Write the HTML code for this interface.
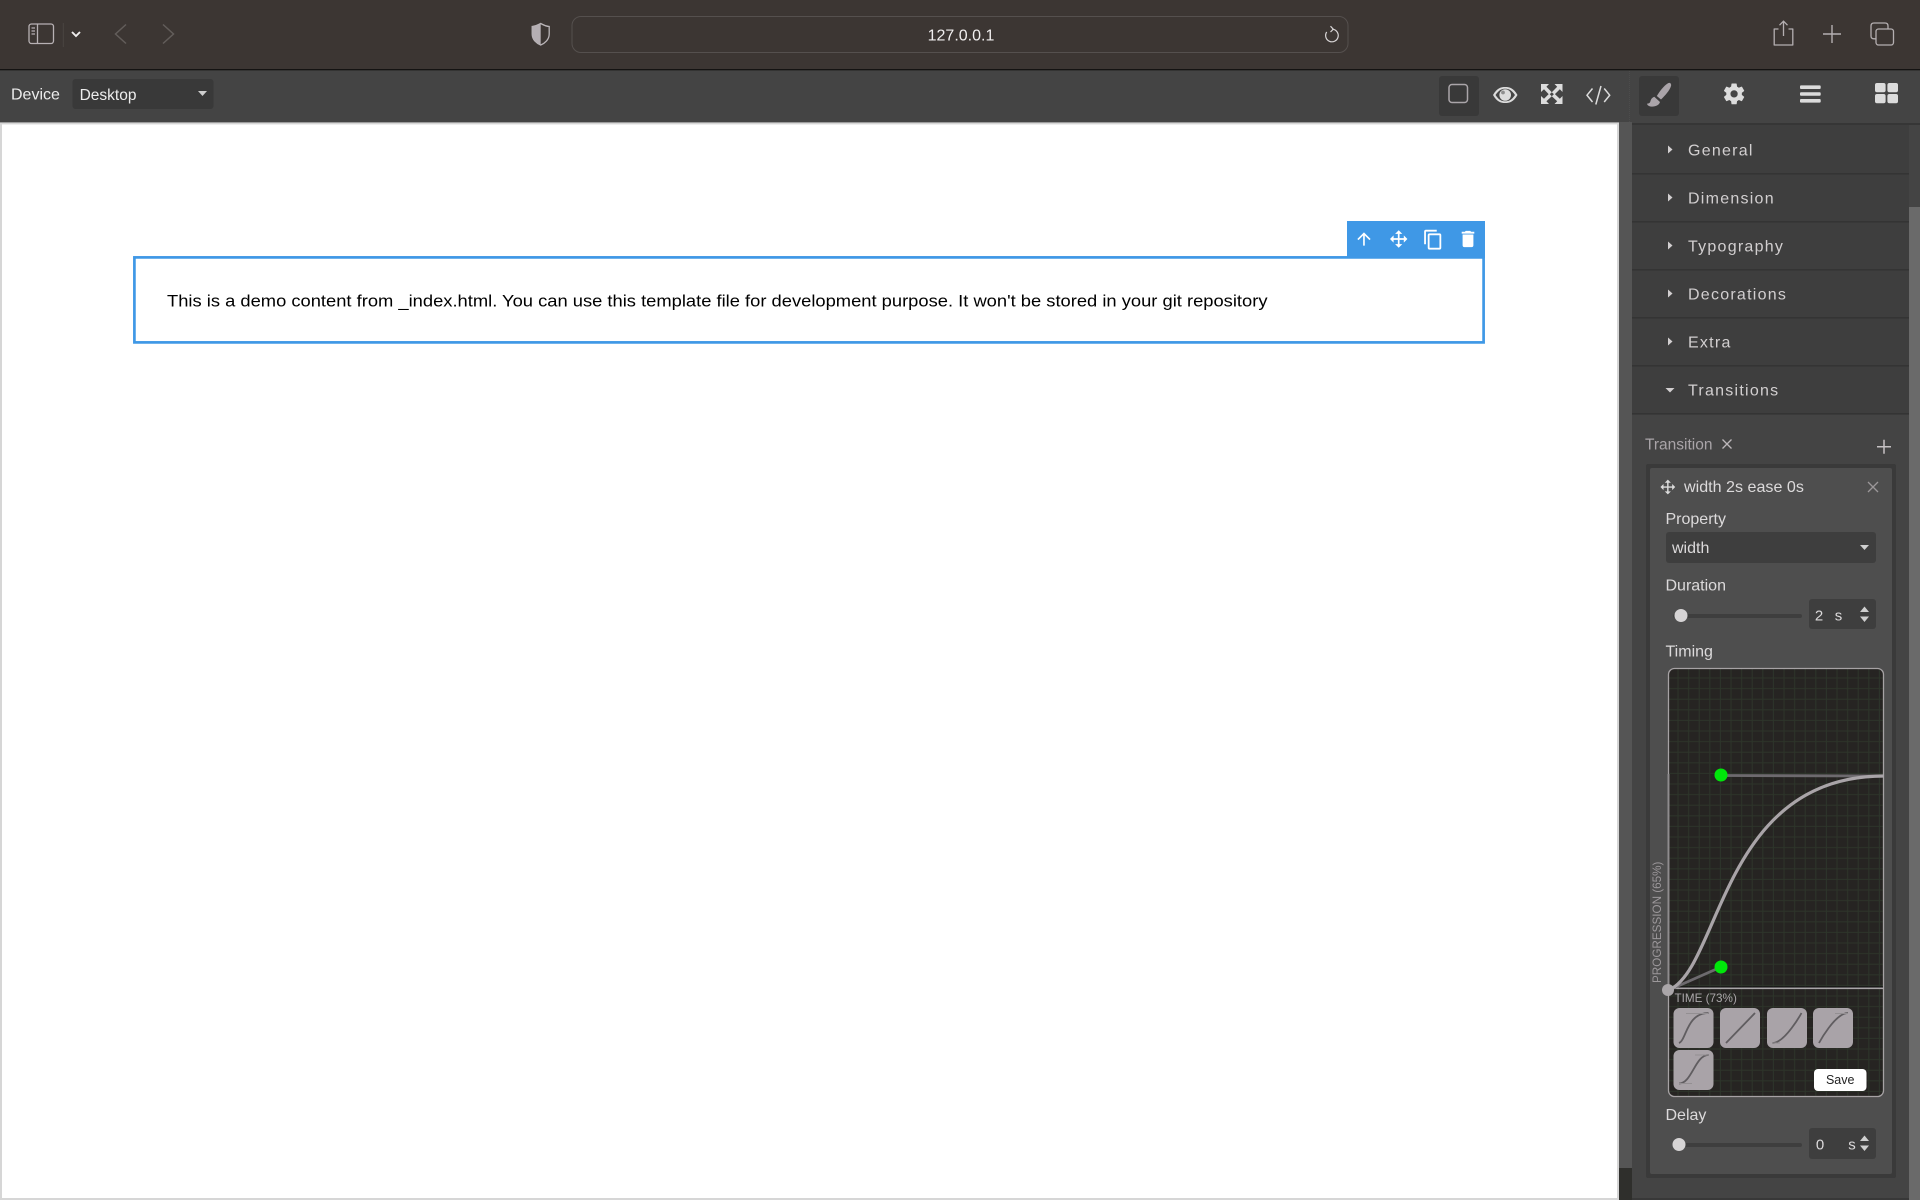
<!DOCTYPE html>
<html lang="en">
<head>
<meta charset="utf-8">
<title>127.0.0.1</title>
<style>
html,body{margin:0;padding:0;width:1920px;height:1200px;overflow:hidden;background:#444}
svg{position:absolute;left:0;top:0;display:block}
text{font-family:"Liberation Sans",Arial,sans-serif}
</style>
</head>
<body>
<svg width="1920" height="1200" viewBox="0 0 1920 1200" xmlns="http://www.w3.org/2000/svg">
<defs>
<pattern id="grid" width="10.6" height="10.6" patternUnits="userSpaceOnUse" x="1668" y="668">
<rect width="10.6" height="10.6" fill="#262422"/>
<path d="M10 0V10.6M0 10H10.6" stroke="#2d352a" stroke-width="1" fill="none"/>
</pattern>
</defs>

<!-- browser chrome -->
<rect x="0" y="0" width="1920" height="69" fill="#3c3633"/>
<rect x="0" y="69" width="1920" height="1.4" fill="#141312"/>
<rect x="0" y="70.4" width="1920" height="1130" fill="#444444"/>

<!-- sidebar icon -->
<rect x="29" y="24" width="24.5" height="19.5" rx="2.5" fill="none" stroke="#b7b1b4" stroke-width="1.3"/>
<path d="M37.5 24V43.5" stroke="#b7b1b4" stroke-width="1.3"/>
<path d="M31.5 28H35M31.5 31H35M31.5 34H35" stroke="#b7b1b4" stroke-width="1.2"/>
<path d="M63.3 23V47" stroke="#4a4542" stroke-width="1"/>
<path d="M72 32L76 36L80 32" fill="none" stroke="#f0eeee" stroke-width="1.9"/>
<path d="M126 24.5L115.5 34L126 43.5" fill="none" stroke="#625d5a" stroke-width="1.5"/>
<path d="M163 24.5L173.5 34L163 43.5" fill="none" stroke="#625d5a" stroke-width="1.5"/>

<!-- shield -->
<path d="M540.7 23.5C536.5 25.8 534 26.4 532.2 26.5V34C532.2 39.8 536.8 43.4 540.7 45C544.6 43.4 549.2 39.8 549.2 34V26.5C547.4 26.4 544.9 25.8 540.7 23.5Z" fill="none" stroke="#bab5b8" stroke-width="1.3"/>
<path d="M540.7 23.5C536.5 25.8 534 26.4 532.2 26.5V34C532.2 39.8 536.8 43.4 540.7 45Z" fill="#b5afb3"/>

<!-- url bar -->
<rect x="572" y="16.5" width="776" height="36" rx="9" fill="#3c3633" stroke="#55504e" stroke-width="1"/>
<text x="961" y="40.7" font-size="16" text-anchor="middle" fill="#f1efef">127.0.0.1</text>
<path d="M1332.3 29.2A6.3 6.3 0 1 1 1326.7 32" fill="none" stroke="#d8d5d6" stroke-width="1.2"/>
<path d="M1330.5 26.2L1333.3 29.2L1330.5 32" fill="none" stroke="#d8d5d6" stroke-width="1.2"/>

<!-- share / plus / tabs -->
<path d="M1778.5 29H1774.2V45H1792.8V29H1788.5" fill="none" stroke="#b4afb1" stroke-width="1.3" stroke-linejoin="round"/>
<path d="M1783.5 36V21.5M1779.5 25.2L1783.5 21.2L1787.5 25.2" fill="none" stroke="#b4afb1" stroke-width="1.3"/>
<path d="M1823 34H1841M1832 25V43" stroke="#b4afb1" stroke-width="1.4"/>
<rect x="1876" y="29" width="17.5" height="16" rx="2.5" fill="none" stroke="#b4afb1" stroke-width="1.3"/>
<path d="M1876 38.8H1874C1872 38.8 1871 37.8 1871 36V26C1871 24 1872 23 1874 23H1885C1887 23 1888 24 1888 26V29" fill="none" stroke="#b4afb1" stroke-width="1.3"/>

<!-- device bar -->
<text x="11" y="99.5" font-size="16" fill="#ececec">Device</text>
<rect x="72.5" y="79" width="141" height="30" rx="3" fill="#393939"/>
<text x="79.6" y="100" font-size="15.5" fill="#ececec">Desktop</text>
<path d="M198 91H207L202.5 96Z" fill="#cfcfcf"/>

<!-- toolbar buttons -->
<rect x="1439" y="76" width="40" height="40" rx="3" fill="#393939"/>
<rect x="1449" y="84.5" width="18.5" height="18" rx="3" fill="none" stroke="#aaa5a9" stroke-width="1.5"/>
<path d="M1493 95C1497 88 1501 87 1505.2 87C1509.5 87 1513.5 88 1517.5 95C1513.5 102 1509.5 103 1505.2 103C1501 103 1497 102 1493 95Z" fill="#dcdcdc"/>
<path d="M1495.5 95C1499 89.7 1502 88.7 1505.2 88.7C1508.5 88.7 1511.5 89.7 1515 95C1511.5 100.3 1508.5 101.3 1505.2 101.3C1502 101.3 1499 100.3 1495.5 95Z" fill="#444"/>
<circle cx="1505.2" cy="95" r="5.8" fill="#dcdcdc"/>
<circle cx="1503" cy="92.5" r="1.9" fill="#8f8f8f"/>
<path d="M1541 84H1549L1546.4 86.8L1551.8 92.2L1549.2 94.8L1544 89.2L1541 92ZM1562.5 84V92L1559.8 89.2L1554.4 94.6L1551.8 92.2L1557.2 86.8L1554.5 84ZM1541 104V96L1544 98.8L1549.2 93.6L1551.8 96.2L1546.4 101.2L1549 104ZM1562.5 104H1554.5L1557.2 101.2L1551.8 96.2L1554.4 93.6L1559.8 98.8L1562.5 96Z" fill="#dcdcdc"/>
<path d="M1592.5 88.5L1587 95.2L1592.5 102M1604.2 88.5L1609.7 95.2L1604.2 102M1601 86L1595.8 104.5" fill="none" stroke="#dcdcdc" stroke-width="1.5"/>
<path d="M1629.5 71V122" stroke="#4c4c4c" stroke-width="1" stroke-dasharray="1 1"/>

<!-- tab icons -->
<rect x="1639" y="76" width="40" height="40" rx="3" fill="#393939"/>
<path d="M1668 83.2C1670 82.2 1671.6 83.6 1671 86C1669.6 90.5 1665.5 95 1661 99.5L1656.8 96C1659.5 91.5 1663.5 86 1668 83.2Z" fill="#aaa4a9"/>
<path d="M1654.3 96.8L1660 102C1659.2 105 1656 106.6 1652 106.6C1649.3 106.6 1647.2 105.3 1647 103.6C1649 103.6 1650 103 1650.5 101C1651 99 1652.5 97.4 1654.3 96.8Z" fill="#aaa4a9"/>
<g transform="translate(1721.6,81.4) scale(1.04)" fill="#dcdcdc"><path d="M12,15.5A3.5,3.5 0 0,1 8.5,12A3.5,3.5 0 0,1 12,8.5A3.5,3.5 0 0,1 15.5,12A3.5,3.5 0 0,1 12,15.5M19.43,12.97C19.47,12.65 19.5,12.33 19.5,12C19.5,11.67 19.47,11.34 19.43,11L21.54,9.37C21.73,9.22 21.78,8.95 21.66,8.73L19.66,5.27C19.54,5.05 19.27,4.96 19.05,5.05L16.56,6.05C16.04,5.66 15.5,5.32 14.87,5.07L14.5,2.42C14.46,2.18 14.25,2 14,2H10C9.75,2 9.54,2.18 9.5,2.42L9.13,5.07C8.5,5.32 7.96,5.66 7.44,6.05L4.95,5.05C4.73,4.96 4.46,5.05 4.34,5.27L2.34,8.73C2.21,8.95 2.27,9.22 2.46,9.37L4.57,11C4.53,11.34 4.5,11.67 4.5,12C4.5,12.33 4.53,12.65 4.57,12.97L2.46,14.63C2.27,14.78 2.21,15.05 2.34,15.27L4.34,18.73C4.46,18.95 4.73,19.03 4.95,18.95L7.44,17.94C7.96,18.34 8.5,18.68 9.13,18.93L9.5,21.58C9.54,21.82 9.75,22 10,22H14C14.25,22 14.46,21.82 14.5,21.58L14.87,18.93C15.5,18.67 16.04,18.34 16.56,17.94L19.05,18.95C19.27,19.03 19.54,18.95 19.66,18.73L21.66,15.27C21.78,15.05 21.73,14.78 21.54,14.63L19.43,12.97Z"/></g>
<rect x="1800" y="85.4" width="20.7" height="3.6" rx="1" fill="#dcdcdc"/>
<rect x="1800" y="92.2" width="20.7" height="3.6" rx="1" fill="#dcdcdc"/>
<rect x="1800" y="99" width="20.7" height="3.6" rx="1" fill="#dcdcdc"/>
<rect x="1875" y="83" width="10.6" height="9.2" rx="2" fill="#dcdcdc"/>
<rect x="1887.4" y="83" width="10.6" height="9.2" rx="2" fill="#dcdcdc"/>
<rect x="1875" y="94" width="10.6" height="9.2" rx="2" fill="#dcdcdc"/>
<rect x="1887.4" y="94" width="10.6" height="9.2" rx="2" fill="#dcdcdc"/>

<!-- canvas -->
<rect x="1619" y="122" width="13" height="1078" fill="#555555"/>
<rect x="1619" y="1168" width="13" height="32" fill="#2f2f2c"/>
<rect x="0" y="122.4" width="1619" height="1077.6" fill="#d6d6d6"/>
<rect x="2" y="124.4" width="1615" height="1073.6" fill="#ffffff"/>

<!-- selected block -->
<rect x="134.4" y="257.4" width="1349.2" height="85" fill="#fff" stroke="#3f98e6" stroke-width="2.7"/>
<rect x="1347" y="221" width="138" height="37" fill="#3f98e6"/>
<text x="167" y="306.7" font-size="17" fill="#000" textLength="1100.5" lengthAdjust="spacingAndGlyphs">This is a demo content from _index.html. You can use this template file for development purpose. It won't be stored in your git repository</text>
<g fill="#ffffff">
<g transform="translate(1354,229) scale(.83)"><path d="M4 12l1.41 1.41L11 7.83V20h2V7.83l5.58 5.59L20 12l-8-8-8 8z"/></g>
<g transform="translate(1388.5,228.8) scale(.85)"><path d="M13,6V11H18V7.75L22.25,12L18,16.25V13H13V18H16.25L12,22.25L7.75,18H11V13H6V16.25L1.75,12L6,7.75V11H11V6H7.75L12,1.75L16.25,6H13Z"/></g>
<g transform="translate(1422.35,228.9) scale(.9)"><path d="M19,21H8V7H19M19,5H8A2,2 0 0,0 6,7V21A2,2 0 0,0 8,23H19A2,2 0 0,0 21,21V7A2,2 0 0,0 19,5M16,1H4A2,2 0 0,0 2,3V17H4V3H16V1Z"/></g>
<g transform="translate(1457.2,228.2) scale(.9)"><path d="M19,4H15.5L14.5,3H9.5L8.5,4H5V6H19M6,19A2,2 0 0,0 8,21H16A2,2 0 0,0 18,19V7H6V19Z"/></g>
</g>

<!-- panel -->
<rect x="1632" y="123" width="288" height="2" fill="#363636"/>
<rect x="1632" y="125" width="277" height="289" fill="#3e3e3e"/>
<rect x="1909" y="207" width="11" height="993" fill="#6a6a6a"/>
<g fill="#343434">
<rect x="1632" y="173" width="277" height="1.6"/>
<rect x="1632" y="221" width="277" height="1.6"/>
<rect x="1632" y="269" width="277" height="1.6"/>
<rect x="1632" y="317" width="277" height="1.6"/>
<rect x="1632" y="365" width="277" height="1.6"/>
<rect x="1632" y="413" width="277" height="1.6"/>
</g>
<g font-size="16" letter-spacing="1.25" fill="#d2cfd0">
<text x="1688" y="155.5">General</text>
<text x="1688" y="203.5">Dimension</text>
<text x="1688" y="251.5">Typography</text>
<text x="1688" y="299.5">Decorations</text>
<text x="1688" y="347.5">Extra</text>
<text x="1688" y="395.5">Transitions</text>
</g>
<g fill="#d2cfd0">
<path d="M1668 145.5L1672.5 149.5L1668 153.5Z"/>
<path d="M1668 193.5L1672.5 197.5L1668 201.5Z"/>
<path d="M1668 241.5L1672.5 245.5L1668 249.5Z"/>
<path d="M1668 289.5L1672.5 293.5L1668 297.5Z"/>
<path d="M1668 337.5L1672.5 341.5L1668 345.5Z"/>
<path d="M1665.5 388L1674.5 388L1670 392.5Z"/>
</g>

<!-- transition header -->
<text x="1645" y="449.3" font-size="15.5" fill="#a9a4a8">Transition</text>
<path d="M1722.5 439.5L1731.5 448.5M1731.5 439.5L1722.5 448.5" stroke="#bdb8bb" stroke-width="1.3"/>
<path d="M1877 446.7H1891M1884 439.7V453.7" stroke="#c6c2c4" stroke-width="1.5"/>

<!-- card -->
<rect x="1646" y="464" width="250" height="714" rx="2" fill="#3a3a3a"/>
<rect x="1650" y="468" width="242" height="706" rx="2" fill="#4e4e4e"/>
<g transform="translate(1659.2,478.4) scale(.72)" fill="#dcdcdc"><path d="M13,6V11H18V7.75L22.25,12L18,16.25V13H13V18H16.25L12,22.25L7.75,18H11V13H6V16.25L1.75,12L6,7.75V11H11V6H7.75L12,1.75L16.25,6H13Z"/></g>
<text x="1684" y="492" font-size="16.1" fill="#dcdadb">width 2s ease 0s</text>
<path d="M1868 482L1878 492M1878 482L1868 492" stroke="#9b9799" stroke-width="1.3"/>

<text x="1665.5" y="524" font-size="16" fill="#dcdadb">Property</text>
<rect x="1666" y="532" width="210" height="31" rx="3" fill="#3e3e3e"/>
<text x="1672" y="553" font-size="16" fill="#dcdadb">width</text>
<path d="M1860 545H1869L1864.5 550Z" fill="#cfcfcf"/>

<text x="1665.5" y="590.7" font-size="16" fill="#dcdadb">Duration</text>
<rect x="1673" y="614" width="129" height="4" rx="2" fill="#3e3e3e"/>
<circle cx="1681" cy="615.5" r="6.5" fill="#d6d4d5"/>
<rect x="1809" y="599" width="67" height="30" rx="3" fill="#3e3e3e"/>
<text x="1819" y="620.5" font-size="15" text-anchor="middle" fill="#dcdadb">2</text>
<text x="1838.5" y="620.5" font-size="15" text-anchor="middle" fill="#dcdadb">s</text>
<path d="M1864.5 606.5L1869 612H1860Z" fill="#cfcfcf"/>
<path d="M1864.5 622L1869 616.5H1860Z" fill="#cfcfcf"/>

<text x="1665.5" y="656.7" font-size="16" fill="#dcdadb">Timing</text>

<!-- bezier editor -->
<rect x="1668.5" y="668.5" width="215" height="428" rx="6" fill="url(#grid)" stroke="#a6a2a4" stroke-width="1.3"/>
<path d="M1668.5 774V990" stroke="#8f8c8e" stroke-width="2"/>
<rect x="1669" y="986.5" width="214" height="1" fill="#0f0f0f"/>
<rect x="1669" y="987.5" width="214.5" height="1.6" fill="#aaa6a8"/>
<path d="M1669 990L1721 967" stroke="#6d6a6e" stroke-width="2.8" fill="none"/>
<path d="M1721 775.5L1884 776" stroke="#6d6a6e" stroke-width="2.8" fill="none"/>
<path d="M1669 990C1721 967 1721 776 1884 776" fill="none" stroke="#a9a4a8" stroke-width="3.2"/>
<circle cx="1668" cy="990" r="6" fill="#aaa6a9"/>
<circle cx="1721" cy="775" r="6.5" fill="#00e60a"/>
<circle cx="1721" cy="967" r="6.5" fill="#00e60a"/>
<text transform="translate(1661,983) rotate(-90)" font-size="11.7" fill="#9c989b">PROGRESSION (65%)</text>
<text x="1674.5" y="1002" font-size="11.7" fill="#aaa6a9">TIME (73%)</text>

<!-- presets -->
<g fill="#a9a3a8">
<rect x="1673.5" y="1008" width="40" height="40" rx="6"/>
<rect x="1720" y="1008" width="40" height="40" rx="6"/>
<rect x="1767" y="1008" width="40" height="40" rx="6"/>
<rect x="1813" y="1008" width="40" height="40" rx="6"/>
<rect x="1673.5" y="1050" width="40" height="40" rx="6"/>
</g>
<g fill="none" stroke="#605d60" stroke-width="1.8">
<path d="M1679 1043C1686.5 1040 1686.5 1013 1708.5 1013"/>
<path d="M1726 1043L1755 1013"/>
<path d="M1772.5 1043C1785 1043 1801.5 1013 1801.5 1013"/>
<path d="M1819 1043C1819 1043 1835 1013 1848 1013"/>
<path d="M1679 1083.5C1692 1083.5 1695 1055 1708.5 1055"/>
</g>
<g fill="none" stroke="#938f92" stroke-width="1">
<path d="M1686 1013.5H1708"/>
<path d="M1780 1043H1772"/>
<path d="M1835 1013.5H1848"/>
<path d="M1679 1083.5H1692M1695 1055H1708"/>
</g>
<rect x="1814" y="1069" width="52.5" height="22" rx="4" fill="#ffffff"/>
<text x="1840.2" y="1084" font-size="12.5" text-anchor="middle" fill="#222">Save</text>

<text x="1665.5" y="1120" font-size="16" fill="#dcdadb">Delay</text>
<rect x="1673" y="1143" width="129" height="4" rx="2" fill="#3e3e3e"/>
<circle cx="1679" cy="1144.5" r="6.5" fill="#d6d4d5"/>
<rect x="1809" y="1128" width="67" height="31" rx="3" fill="#3e3e3e"/>
<text x="1820" y="1149.5" font-size="15" text-anchor="middle" fill="#dcdadb">0</text>
<text x="1852" y="1149.5" font-size="15" text-anchor="middle" fill="#dcdadb">s</text>
<path d="M1864.5 1135.5L1869 1141H1860Z" fill="#cfcfcf"/>
<path d="M1864.5 1151L1869 1145.5H1860Z" fill="#cfcfcf"/>

<rect x="1632" y="1198" width="277" height="2" fill="#383838"/>
</svg>
</body>
</html>
